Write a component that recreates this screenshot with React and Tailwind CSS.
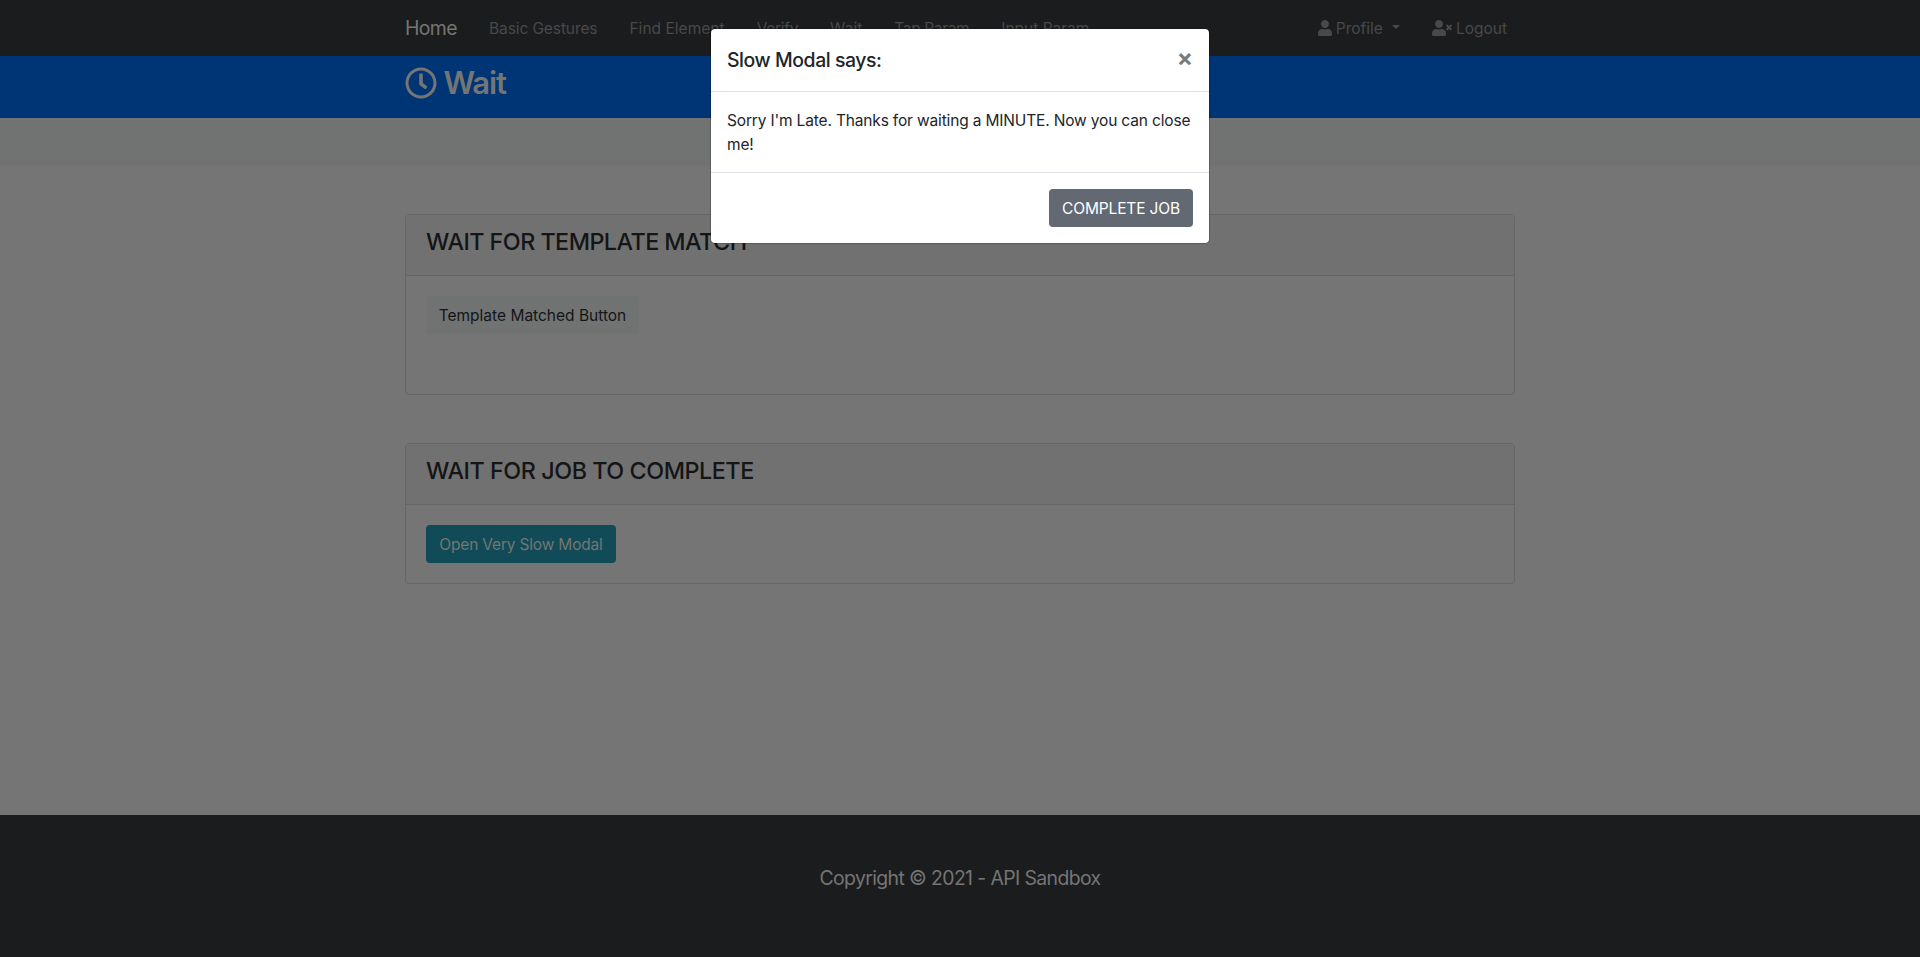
import { FaRegClock, FaUser, FaUserTimes } from "react-icons/fa";

const LINKS = [
  { label: "Basic Gestures", cls: "tracking-[-0.1px]" },
  { label: "Find Element", cls: "tracking-[0.03px]" },
  { label: "Verify", cls: "tracking-[-0.3px]" },
  { label: "Wait", cls: "tracking-[0.05px]" },
  { label: "Tap Param", cls: "tracking-[-0.36px]" },
  { label: "Input Param", cls: "tracking-[0px]" },
];

function Navbar() {
  return (
    <nav className="h-14 bg-[#1b1c1e]">
      <div className="mx-auto flex h-full w-[1110px] items-center">
        <a className="mr-4 w-[52px] whitespace-nowrap text-[19.4px] leading-[30px] tracking-[-0.6px] text-[#757575]">Home</a>
        <ul className="flex pt-0.5">
          {LINKS.map((l) => (
            <li key={l.label} className={`whitespace-nowrap px-4 ${l.cls}`}>{l.label}</li>
          ))}
        </ul>
        <ul className="ml-auto mr-2 flex gap-8">
          <li className="flex items-center">
            <FaUser className="h-4 w-3.5" />
            <span className="ml-1 pt-0.5">Profile</span>
            <span className="ml-[9px] mb-0.5 border-x-[4.8px] border-t-[4.8px] border-x-transparent border-t-current" />
          </li>
          <li className="flex items-center">
            <FaUserTimes className="h-4 w-5" />
            <span className="ml-1 pt-0.5">Logout</span>
          </li>
        </ul>
      </div>
    </nav>
  );
}

function Card({ title, titleClass, className, children }) {
  return (
    <section className={`rounded-[4px] border border-[#656565] ${className}`}>
      <header className="h-[61px] border-b border-[#656565] bg-[#717171] px-5 pt-3">
        <h4 className={`text-[23.3px] font-medium leading-[29px] text-[#141517] ${titleClass}`}>{title}</h4>
      </header>
      <div className="p-5">{children}</div>
    </section>
  );
}

function Modal() {
  return (
    <div className="absolute inset-x-0 top-7 flex justify-center">
      <div className="w-[500px] rounded-[5px] border border-black/20 bg-white bg-clip-padding text-[#212529]">
        <div className="flex h-[63px] items-start justify-between border-b border-[#dee2e6] p-4">
          <h5 className="text-[19.4px] font-medium leading-[30px] tracking-[-0.41px]">Slow Modal says:</h5>
          <button className="pt-px text-[24px] font-bold leading-6 text-[#7b7b7b]">×</button>
        </div>
        <p className="px-4 pt-[17px] pb-[15px] text-[15.5px] leading-6 tracking-[-0.16px]">
          Sorry I'm Late. Thanks for waiting a MINUTE. Now you can close
          <br />
          me!
        </p>
        <div className="flex justify-end border-t border-[#dee2e6] p-4">
          <button className="h-[38px] w-[144px] whitespace-nowrap rounded-[4px] bg-[#626972] pt-0.5 text-[15.5px] tracking-[-0.14px] text-white">COMPLETE JOB</button>
        </div>
      </div>
    </div>
  );
}

export default function App() {
  return (
    <div className="relative flex h-[957px] flex-col overflow-hidden bg-[#757575] font-['Inter',sans-serif] text-[15.5px] leading-6 text-[#484949]">
      <Navbar />
      <div className="h-[62px] bg-[#003575]">
        <h2 className="mx-auto flex w-[1110px] items-center pt-2 text-[31px] font-semibold leading-[38px] tracking-[-1.07px] text-[#757575]">
          <FaRegClock className="size-8" />
          <span className="ml-[6.5px]">Wait</span>
        </h2>
      </div>
      <div className="h-12 bg-[#707372]" />
      <main className="mx-auto flex w-[1110px] grow flex-col gap-12 pt-12">
        <Card title="WAIT FOR TEMPLATE MATCH" titleClass="tracking-[-0.52px]" className="h-[181px]">
          <button className="h-[38px] w-[213px] whitespace-nowrap rounded-[4px] bg-[#707372] pt-0.5 text-[#141517]">Template Matched Button</button>
        </Card>
        <Card title="WAIT FOR JOB TO COMPLETE" titleClass="tracking-[-0.43px]" className="h-[141px]">
          <button className="h-[38px] w-[190px] whitespace-nowrap rounded-[4px] bg-[#104b57] pt-0.5 tracking-[-0.18px] text-[#757575]">Open Very Slow Modal</button>
        </Card>
      </main>
      <footer className="flex h-[142px] justify-center bg-[#1b1c1e] pt-12">
        <p className="text-[19.4px] font-normal leading-[30px] tracking-[-0.6px] text-[#757575]">Copyright © 2021 - API Sandbox</p>
      </footer>
      <Modal />
    </div>
  );
}
